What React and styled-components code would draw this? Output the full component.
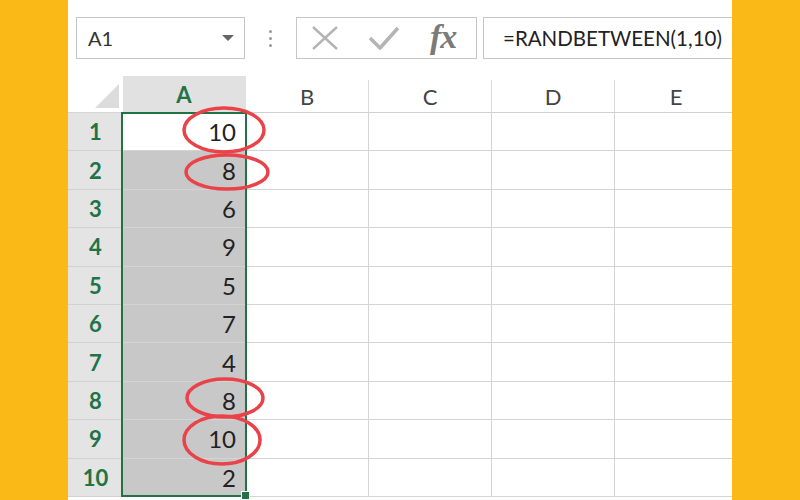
import styled, { createGlobalStyle } from "styled-components";

const GlobalStyle = createGlobalStyle`
  html, body {
    margin: 0;
    padding: 0;
    background: #fbb917;
  }
  body {
    font-family: "Lato", "Liberation Sans", sans-serif;
  }
`;

const Frame = styled.div`
  width: 800px;
  height: 500px;
  background: #fbb917;
  padding: 0 68px;
  box-sizing: border-box;
  overflow: hidden;
`;

const Sheet = styled.div`
  background: #ffffff;
  height: 100%;
  overflow: hidden;
`;

const FormulaBar = styled.div`
  display: flex;
  align-items: center;
  height: 42px;
  padding: 17px 0 17px 8px;
`;

const NameBox = styled.div`
  width: 169px;
  height: 42px;
  box-sizing: border-box;
  border: 1px solid #c6c6c6;
  display: flex;
  align-items: center;
  justify-content: space-between;
  padding: 0 10px 0 11px;
  font-size: 20px;
  color: #333;
`;

const Caret = styled.span`
  width: 0;
  height: 0;
  border-left: 6px solid transparent;
  border-right: 6px solid transparent;
  border-top: 6px solid #666;
`;

const Dots = styled.div`
  width: 51px;
  display: flex;
  flex-direction: column;
  align-items: center;
  gap: 4px;
  & span {
    width: 3px;
    height: 3px;
    border-radius: 50%;
    background: #9a9a9a;
  }
`;

const IconBox = styled.div`
  width: 181px;
  height: 42px;
  box-sizing: border-box;
  border: 1px solid #c6c6c6;
  display: flex;
  align-items: center;
  padding-left: 14px;
`;

const IconSlot = styled.div`
  width: ${(p) => p.$w}px;
  display: flex;
  align-items: center;
`;

const Fx = styled.span`
  font-family: "Liberation Serif", serif;
  font-style: italic;
  font-weight: bold;
  font-size: 34px;
  color: #7a7a7a;
  letter-spacing: -1px;
  line-height: 1;
  margin-top: -3px;
`;

const FormulaInput = styled.div`
  flex: 1;
  height: 42px;
  margin-left: 6px;
  box-sizing: border-box;
  border: 1px solid #c6c6c6;
  border-right: none;
  display: flex;
  align-items: center;
  padding-left: 19px;
  font-size: 20.5px;
  color: #222;
  white-space: nowrap;
  overflow: hidden;
`;

const Grid = styled.div`
  position: relative;
  display: grid;
  grid-template-columns: 55px repeat(5, 123px);
  grid-template-rows: 37px repeat(10, 38.4px);
`;

const Corner = styled.div`
  grid-row: 1;
  grid-column: 1;
  display: flex;
  align-items: flex-end;
  justify-content: flex-end;
  padding: 0 4px 4px 0;
  border-bottom: 1px solid #d6d6d6;
`;

const ColHead = styled.div`
  grid-row: 1;
  grid-column: ${(p) => p.$col};
  display: flex;
  align-items: center;
  justify-content: center;
  box-sizing: border-box;
  font-size: 22px;
  color: ${(p) => (p.$active ? "#217346" : "#444")};
  font-weight: ${(p) => (p.$active ? 700 : 400)};
  background: ${(p) => (p.$active ? "#e1e1e1" : "#fff")};
  border-right: 1px solid ${(p) => (p.$active ? "#e1e1e1" : "#dadada")};
  border-bottom: 1px solid #d0d0d0;
  margin-top: ${(p) => (p.$active ? 0 : 4)}px;
`;

const RowHead = styled.div`
  grid-row: ${(p) => p.$row};
  grid-column: 1;
  display: flex;
  align-items: center;
  justify-content: center;
  box-sizing: border-box;
  background: #e4e4e4;
  border-bottom: 1px solid #d2d2d2;
  font-size: 22px;
  font-weight: 700;
  color: #217346;
`;

const Cell = styled.div`
  grid-row: ${(p) => p.$row};
  grid-column: ${(p) => p.$col};
  display: flex;
  align-items: center;
  justify-content: flex-end;
  box-sizing: border-box;
  padding-right: 9px;
  font-size: 24px;
  color: #222;
  background: ${(p) => (p.$shaded ? "#c8c8c8" : "#fff")};
  border-right: 1px solid #d4d4d4;
  border-bottom: 1px solid #d4d4d4;
`;

const Selection = styled.div`
  grid-column: 2;
  grid-row: 2 / 12;
  position: relative;
  margin: -1px -1px 0 -2px;
  border: 2px solid #217346;
  pointer-events: none;
`;

const FillHandle = styled.span`
  position: absolute;
  right: -5px;
  bottom: -5px;
  width: 7px;
  height: 7px;
  background: #217346;
  border: 1px solid #fff;
`;

const Marks = styled.svg`
  position: absolute;
  left: 0;
  top: 0;
  pointer-events: none;
  overflow: visible;
`;

const values = [10, 8, 6, 9, 5, 7, 4, 8, 10, 2];
const cols = ["A", "B", "C", "D", "E"];

// ellipse centres are in page pixels; the grid starts at x=68, y=76
const circles = [
  { cx: 224, cy: 130, rx: 40, ry: 22 },
  { cx: 227, cy: 172, rx: 41, ry: 17 },
  { cx: 225, cy: 398, rx: 38, ry: 19 },
  { cx: 222, cy: 440, rx: 38, ry: 24 },
];

function CrossIcon() {
  return (
    <svg width="28" height="26" viewBox="0 0 28 26">
      <path d="M2 2 L26 24 M26 2 L2 24" stroke="#b4b4b4" strokeWidth="2.4" fill="none" />
    </svg>
  );
}

function CheckIcon() {
  return (
    <svg width="32" height="26" viewBox="0 0 32 26">
      <path d="M2 13 L12 23 L30 3" stroke="#b4b4b4" strokeWidth="3.6" fill="none" strokeLinejoin="round" />
    </svg>
  );
}

export default function App() {
  return (
    <Frame>
      <GlobalStyle />
      <Sheet>
        <FormulaBar>
          <NameBox>
            A1
            <Caret />
          </NameBox>
          <Dots>
            <span />
            <span />
            <span />
          </Dots>
          <IconBox>
            <IconSlot $w={57}>
              <CrossIcon />
            </IconSlot>
            <IconSlot $w={62}>
              <CheckIcon />
            </IconSlot>
            <Fx>fx</Fx>
          </IconBox>
          <FormulaInput>=RANDBETWEEN(1,10)</FormulaInput>
        </FormulaBar>

        <Grid>
          <Corner>
            <svg width="24" height="24" viewBox="0 0 24 24">
              <polygon points="24,0 24,24 0,24" fill="#dcdcdc" />
            </svg>
          </Corner>
          {cols.map((c, j) => (
            <ColHead key={c} $col={j + 2} $active={c === "A"}>
              {c}
            </ColHead>
          ))}
          {values.map((v, i) => [
            <RowHead key={"r" + i} $row={i + 2}>
              {i + 1}
            </RowHead>,
            <Cell key={"a" + i} $row={i + 2} $col={2} $shaded={i > 0}>
              {v}
            </Cell>,
            ...cols
              .slice(1)
              .map((c, j) => <Cell key={c + i} $row={i + 2} $col={j + 3} />),
          ])}
          <Selection>
            <FillHandle />
          </Selection>
          <Marks width="664" height="424">
            {circles.map((e, i) => (
              <ellipse
                key={i}
                cx={e.cx - 68}
                cy={e.cy - 76}
                rx={e.rx}
                ry={e.ry}
                fill="none"
                stroke="#ea4249"
                strokeWidth="3.5"
              />
            ))}
          </Marks>
        </Grid>
      </Sheet>
    </Frame>
  );
}
